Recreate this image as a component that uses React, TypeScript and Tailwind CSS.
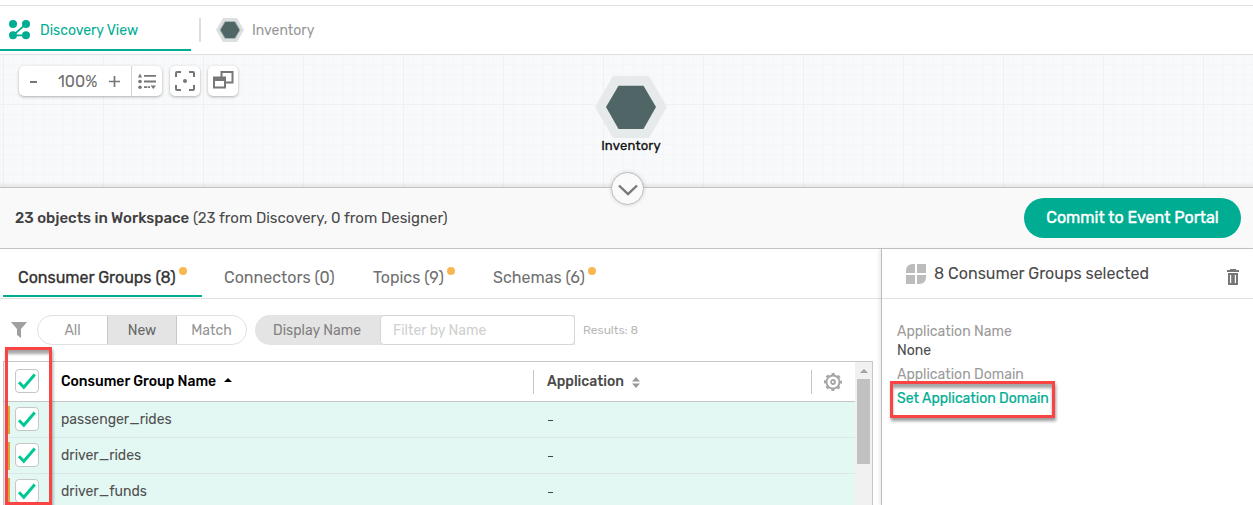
import React from "react";

const rows = ["passenger_rides", "driver_rides", "driver_funds"];

function Dot() {
  return <span className="mt-[18px] ml-[3px] size-2 shrink-0 rounded-full bg-[#f9b752]" />;
}

function Checkbox() {
  return (
    <span className="mb-[2px] flex size-6 shrink-0 items-center justify-center rounded-[4px] border border-[#c6c6c6] bg-white">
      <svg width="22" height="22" viewBox="0 0 22 22" fill="none" stroke="#00c895" strokeWidth="3">
        <path d="M3 12.3L7.8 17.2L18.8 4.6" />
      </svg>
    </span>
  );
}

function Header() {
  return (
    <header className="flex h-[55px] flex-col border-b border-[#e0e0e0] bg-white">
      <div className="h-[6px] shrink-0 border-b border-[#e2e2e2]" />
      <nav className="flex flex-1 text-sm">
        <div className="flex h-[45px] w-[191px] items-center border-b-2 border-[#00ad93] pl-[9px] text-[#00ad93]">
          <svg width="22" height="20" viewBox="0 0 22 20" fill="currentColor" className="mt-[5px]">
            <circle cx="4" cy="4" r="4" />
            <circle cx="17" cy="4" r="4" />
            <circle cx="4" cy="15.3" r="4" />
            <circle cx="17" cy="15.3" r="4" />
            <path d="M4 15.3L17 4M4 15.3H17" stroke="currentColor" strokeWidth="1.7" />
          </svg>
          <span className="mt-[7px] ml-[9px] whitespace-nowrap">Discovery View</span>
        </div>
        <div className="flex items-center text-[#979797]">
          <span className="ml-2 h-6 w-[2px] bg-[#dedede]" />
          <svg width="28" height="24" viewBox="0 0 28 24" className="ml-[15px]">
            <path d="M7 0H21L28 12L21 24H7L0 12Z" fill="#dce0e0" />
            <path d="M9 3.5H19L24 12L19 20.5H9L4 12Z" fill="#506666" stroke="#a9b3b3" strokeWidth="1" />
          </svg>
          <span className="mt-[2px] ml-2">Inventory</span>
        </div>
      </nav>
    </header>
  );
}

function Toolbar() {
  return (
    <div className="flex h-[41px] items-start gap-2 pt-[11px] pl-[19px] text-[#707070]">
      <div className="flex h-[30px] w-[143px] rounded-[5px] bg-white shadow-[0_1px_3px_rgba(0,0,0,0.3)]">
        <div className="flex w-[113px] items-center border-r border-[#d4d4d4]">
          <span className="mt-px ml-[11px] h-[2px] w-[7px] bg-[#777]" />
          <span className="mt-px ml-[21px] w-[52px] text-base">100%</span>
          <svg width="11" height="11" viewBox="0 0 11 11" className="-ml-px" stroke="#777" strokeWidth="1.7">
            <path d="M0 5.5H11M5.5 0V11" />
          </svg>
        </div>
        <div className="flex flex-1 items-center justify-center">
          <svg width="18" height="17" viewBox="0 0 18 17" fill="#777">
            <path d="M0 4.5L2 .5L4 4.5ZM6 2H18V3.8H6ZM6 7.6H18V9.4H6ZM6 13.2H9.3V15H6ZM10 13.2H12V15H10ZM12.5 12.5H18L15.3 16Z" />
            <circle cx="2" cy="8.5" r="1.8" />
            <circle cx="2" cy="14.2" r="1.8" />
          </svg>
        </div>
      </div>
      <div className="flex size-[30px] items-center justify-center rounded-[5px] bg-white shadow-[0_1px_3px_rgba(0,0,0,0.3)]">
        <svg width="20" height="20" viewBox="0 0 20 20" fill="none" stroke="#777" strokeWidth="2">
          <path d="M1 6V2Q1 1 2 1H6M14 1H18Q19 1 19 2V6M19 14V18Q19 19 18 19H14M6 19H2Q1 19 1 18V14" />
          <circle cx="10" cy="10" r="2" fill="#777" stroke="none" />
        </svg>
      </div>
      <div className="flex size-[30px] items-center justify-center rounded-[5px] bg-white shadow-[0_1px_3px_rgba(0,0,0,0.3)]">
        <svg width="21" height="18" viewBox="0 0 21 18" fill="none" stroke="#777" strokeWidth="2" className="mb-[3px]">
          <path d="M8.5 6V1H19.5V11.5H12.5M1 6.5H12V16.5H1Z" />
          <path d="M1 6H12V10H1Z" fill="#777" stroke="none" />
        </svg>
      </div>
    </div>
  );
}

function Canvas() {
  return (
    <section className="h-[132px] bg-[#f8f9fb] bg-[linear-gradient(90deg,#eff0f2_1px,transparent_1px),linear-gradient(#eff0f2_1px,transparent_1px),linear-gradient(90deg,#f5f6f8_1px,transparent_1px),linear-gradient(#f5f6f8_1px,transparent_1px)] bg-[size:100px_100px,100px_100px,10px_10px,10px_10px] bg-[position:3px_49px,3px_49px,3px_9px,3px_9px] shadow-[inset_0_-4px_4px_-2px_rgba(0,0,0,0.09)]">
      <div className="flex h-[132px] flex-col">
        <Toolbar />
        <div className="relative">
          <div className="absolute top-[-20px] left-[595px] flex w-[72px] flex-col items-center">
            <svg width="72" height="62" viewBox="0 0 72 62">
              <path d="M18 0H54L72 31L54 62H18L0 31Z" fill="#e6eaea" />
              <path d="M23.5 9.7H48.5L61 31L48.5 53H23.5L11 31Z" fill="#506666" />
            </svg>
            <span className="text-[13px] leading-4 tracking-[0.2px] text-[#111] [-webkit-text-stroke:0.3px_#111]">Inventory</span>
          </div>
        </div>
      </div>
    </section>
  );
}

function Summary() {
  return (
    <section className="relative flex h-[62px] items-center justify-between border-y border-[#c4c4c4] bg-[#f9f9f9] pr-3 pl-[15px] text-[#4a4a4a]">
      <p className="text-[15px]">
        <span className="font-medium text-[#404040]">23 objects in Workspace</span> (23 from Discovery, 0 from Designer)
      </p>
      <button className="h-10 w-[217px] rounded-full bg-[#00ad93] text-base text-white [-webkit-text-stroke:0.4px_white]">Commit to Event Portal</button>
      <span className="absolute top-[-16px] left-[611px] flex size-[33px] items-center justify-center rounded-full border border-[#bdbdbd] bg-[#fafafa] shadow-[0_0_4px_rgba(0,0,0,0.15)]">
        <svg width="20" height="12" viewBox="0 0 20 12" fill="none" stroke="#777" strokeWidth="2.4" className="mt-[2px]">
          <path d="M1 1.5L10 10L19 1.5" />
        </svg>
      </span>
    </section>
  );
}

function Tabs() {
  return (
    <nav className="flex h-[50px] shrink-0 border-b border-[#e0e0e0] pl-[3px] text-base whitespace-nowrap text-[#707070]">
      <div className="flex h-12 w-[199px] border-b-2 border-[#00ad93] pl-[15px] text-[#333]">
        <span className="w-[158px] pt-[17px] leading-6 [-webkit-text-stroke:0.3px_#333]">Consumer Groups (8)</span>
        <Dot />
      </div>
      <div className="w-[171px] pt-[17px] pl-[22px] leading-6">Connectors (0)</div>
      <div className="flex w-[120px]">
        <span className="w-[71px] pt-[17px] leading-6">Topics (9)</span>
        <Dot />
      </div>
      <div className="flex">
        <span className="w-[92px] pt-[17px] leading-6">Schemas (6)</span>
        <Dot />
      </div>
    </nav>
  );
}

function Filters() {
  return (
    <div className="flex h-[62px] shrink-0 items-center pl-[11px] text-sm text-[#949494]">
      <svg width="16" height="16" viewBox="0 0 16 16" fill="#a0a0a0">
        <path d="M0 0H16L10 7V16L6 13V7Z" />
      </svg>
      <div className="ml-[10px] flex h-[30px] w-[210px] overflow-hidden rounded-full border border-[#e0e0e0] text-center leading-[29px]">
        <span className="w-[69px]">All</span>
        <span className="w-[70px] border-x border-[#c8c8c8] bg-[#e4e4e4] text-[#666]">New</span>
        <span className="flex-1">Match</span>
      </div>
      <div className="ml-2 flex h-[30px] w-[320px] rounded-l-full bg-[#e4e4e4]">
        <span className="w-[125px] pr-px text-center leading-[31px] text-[#808080]">Display Name</span>
        <span className="w-[195px] rounded-[4px] border border-[#d6d6d6] bg-white pl-3 leading-[29px] text-[#cfcfcf]">Filter by Name</span>
      </div>
      <span className="ml-2 text-xs text-[#b8b8b8]">Results: 8</span>
    </div>
  );
}

function Table() {
  return (
    <div className="ml-[3px] flex h-[144px] w-[870px] border border-b-0 border-[#c6c6c6] text-sm">
      <div className="flex flex-1 flex-col">
        <div className="flex h-10 shrink-0 items-center border-b border-[#c6c6c6] pl-[11px]">
          <Checkbox />
          <span className="ml-[22px] w-[163px] font-medium text-black">Consumer Group Name</span>
          <svg width="8" height="4" viewBox="0 0 8 4" className="mb-[3px]"><path d="M0 4L4 0L8 4Z" /></svg>
          <span className="ml-[301px] h-6 w-px bg-[#c6c6c6]" />
          <span className="ml-[13px] w-[85px] font-medium text-[#4a4a4a]">Application</span>
          <svg width="8" height="11" viewBox="0 0 8 11" fill="#999" className="mt-[2px]"><path d="M0 4.5L4 0L8 4.5ZM0 6.5H8L4 11Z" /></svg>
          <span className="ml-[171px] h-6 w-px bg-[#c6c6c6]" />
          <svg width="18" height="18" viewBox="0 0 18 18" fill="none" stroke="#a5a5a5" className="ml-3">
            <circle cx="9" cy="9" r="6.5" strokeWidth="1.9" />
            <circle cx="9" cy="9" r="8" strokeWidth="2" strokeDasharray="3.14 3.14" strokeDashoffset="1.57" />
            <circle cx="9" cy="9" r="2" strokeWidth="1.8" />
          </svg>
        </div>
        {rows.map((name) => (
          <div key={name} className="flex h-9 shrink-0 items-center border-b border-[#dce8e5] bg-[#e3f8f3] text-[#505050]">
            <span className="ml-1 h-7 w-[2px] bg-[#dba63d]" />
            <span className="ml-[5px] flex"><Checkbox /></span>
            <span className="ml-[22px] w-[487px]">{name}</span>
            <span className="mt-px h-px w-[5px] bg-[#444]" />
          </div>
        ))}
      </div>
      <div className="flex w-[17px] flex-col items-center bg-[#f1f1f1]">
        <svg width="8" height="17" viewBox="0 0 8 17" fill="#a3a3a3"><path d="M0 11L4 7L8 11Z" /></svg>
        <span className="h-[85px] w-[13px] bg-[#c1c1c1]" />
      </div>
    </div>
  );
}

function Details() {
  return (
    <aside className="flex-1 border-l border-[#bdbdbd] shadow-[-2px_0_3px_rgba(0,0,0,0.08)]">
      <div className="flex h-[50px] border-b border-[#e0e0e0] pl-6">
        <svg width="20" height="20" viewBox="0 0 20 20" fill="#bcbcbc" className="mt-[15px]">
          <path d="M0 9V7Q0 0 7 0H9V9ZM11 0H20V9H11ZM0 11H9V20H0ZM11 11H20V13Q20 20 13 20H11Z" />
        </svg>
        <h2 className="mt-[13px] ml-[8px] w-[299px] text-base leading-6 text-[#4a4a4a]">8 Consumer Groups selected</h2>
        <svg width="12" height="16" viewBox="0 0 12 16" fill="#777" className="mt-5 -ml-[6px]">
          <path d="M3 0H9V1H12V3H0V1H3ZM1 4H11V16H1ZM3 6V14H4.2V6ZM7.8 6V14H9V6Z" fillRule="evenodd" />
        </svg>
      </div>
      <dl className="pt-[23px] pl-[15px] text-sm">
        <dt className="h-5 leading-5 text-[#9a9a9a]">Application Name</dt>
        <dd className="h-[23px] leading-[18px] text-[#4a4a4a]">None</dd>
        <dt className="h-5 leading-5 text-[#9a9a9a]">Application Domain</dt>
        <dd className="relative leading-[28px] text-[#00ad93] [-webkit-text-stroke:0.2px_#00ad93]">
          Set Application Domain
          <span className="absolute -top-[4px] -left-[7px] h-[37px] w-[165px] border-[3px] border-[#fa4343] shadow-[1px_3px_3px_rgba(0,0,0,0.4),inset_0_4px_3px_rgba(0,0,0,0.35)]" />
        </dd>
      </dl>
    </aside>
  );
}

export default function App() {
  return (
    <div className="h-[505px] w-[1253px] overflow-hidden bg-white font-['Rubik','Roboto',sans-serif]">
      <Header />
      <Canvas />
      <Summary />
      <main className="relative flex h-[256px]">
        <section className="flex w-[881px] flex-col">
          <Tabs />
          <Filters />
          <Table />
        </section>
        <Details />
        <span className="absolute top-[98px] left-[5px] h-[158px] w-[47px] border-[3px] border-[#fa4343] shadow-[1px_3px_3px_rgba(0,0,0,0.35),inset_0_7px_3px_-3px_rgba(0,0,0,0.35)]" />
      </main>
    </div>
  );
}
